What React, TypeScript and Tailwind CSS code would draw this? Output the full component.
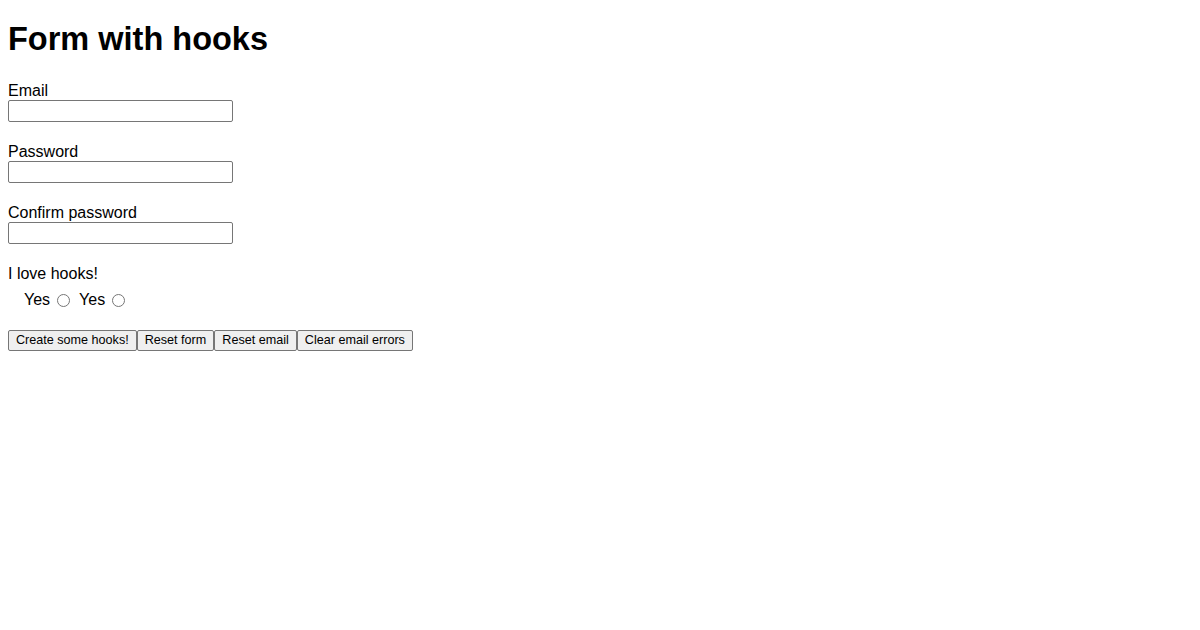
import { useState } from 'react';

const inputClass =
	'block w-[225px] h-[22px] border border-[#767676] rounded-[2px] bg-white px-[2px] text-[13.33px] outline-none';
const buttonClass =
	'h-[21px] border border-[#767676] rounded-[2px] bg-[#efefef] px-[7px] text-[12.6px] leading-[19px] text-black';

function Field({ label, type, value, onChange }: { label: string; type: string; value: string; onChange: (v: string) => void }) {
	return (
		<div className="mb-[19px]">
			<label className="block h-[20px] pt-[2px] leading-[18px]">{label}</label>
			<input type={type} value={value} onChange={(e) => onChange(e.target.value)} className={inputClass} />
		</div>
	);
}

export default function App() {
	const [email, setEmail] = useState('');
	const [password, setPassword] = useState('');
	const [confirm, setConfirm] = useState('');
	const [love, setLove] = useState('');

	const reset = () => {
		setEmail('');
		setPassword('');
		setConfirm('');
		setLove('');
	};

	return (
		<div className="min-h-screen bg-white px-[8px] pt-[21px] text-[16px] text-black" style={{ fontFamily: '"Liberation Sans", Arial, sans-serif' }}>
			<h1 className="h-[37px] text-[32.5px] font-bold leading-[37px]">Form with hooks</h1>
			<form className="mt-[22px]" onSubmit={(e) => e.preventDefault()}>
				<Field label="Email" type="email" value={email} onChange={setEmail} />
				<Field label="Password" type="password" value={password} onChange={setPassword} />
				<Field label="Confirm password" type="password" value={confirm} onChange={setConfirm} />
				<div>
					<div className="h-[20px] pt-[2px] leading-[18px]">I love hooks!</div>
					<div className="mt-[8px] flex h-[18px] items-center pl-[16px] leading-[18px]">
						<label className="flex items-center">
							Yes
							<input type="radio" name="love" checked={love === 'a'} onChange={() => setLove('a')} className="ml-[7px] mr-[3px] mt-[1px] h-[13px] w-[13px]" />
						</label>
						<label className="ml-[6px] flex items-center">
							Yes
							<input type="radio" name="love" checked={love === 'b'} onChange={() => setLove('b')} className="ml-[7px] mr-[3px] mt-[1px] h-[13px] w-[13px]" />
						</label>
					</div>
				</div>
				<div className="mt-[21px] flex">
					<button type="submit" className={buttonClass}>Create some hooks!</button>
					<button type="button" onClick={reset} className={buttonClass}>Reset form</button>
					<button type="button" onClick={() => setEmail('')} className={buttonClass}>Reset email</button>
					<button type="button" className={buttonClass}>Clear email errors</button>
				</div>
			</form>
		</div>
	);
}
